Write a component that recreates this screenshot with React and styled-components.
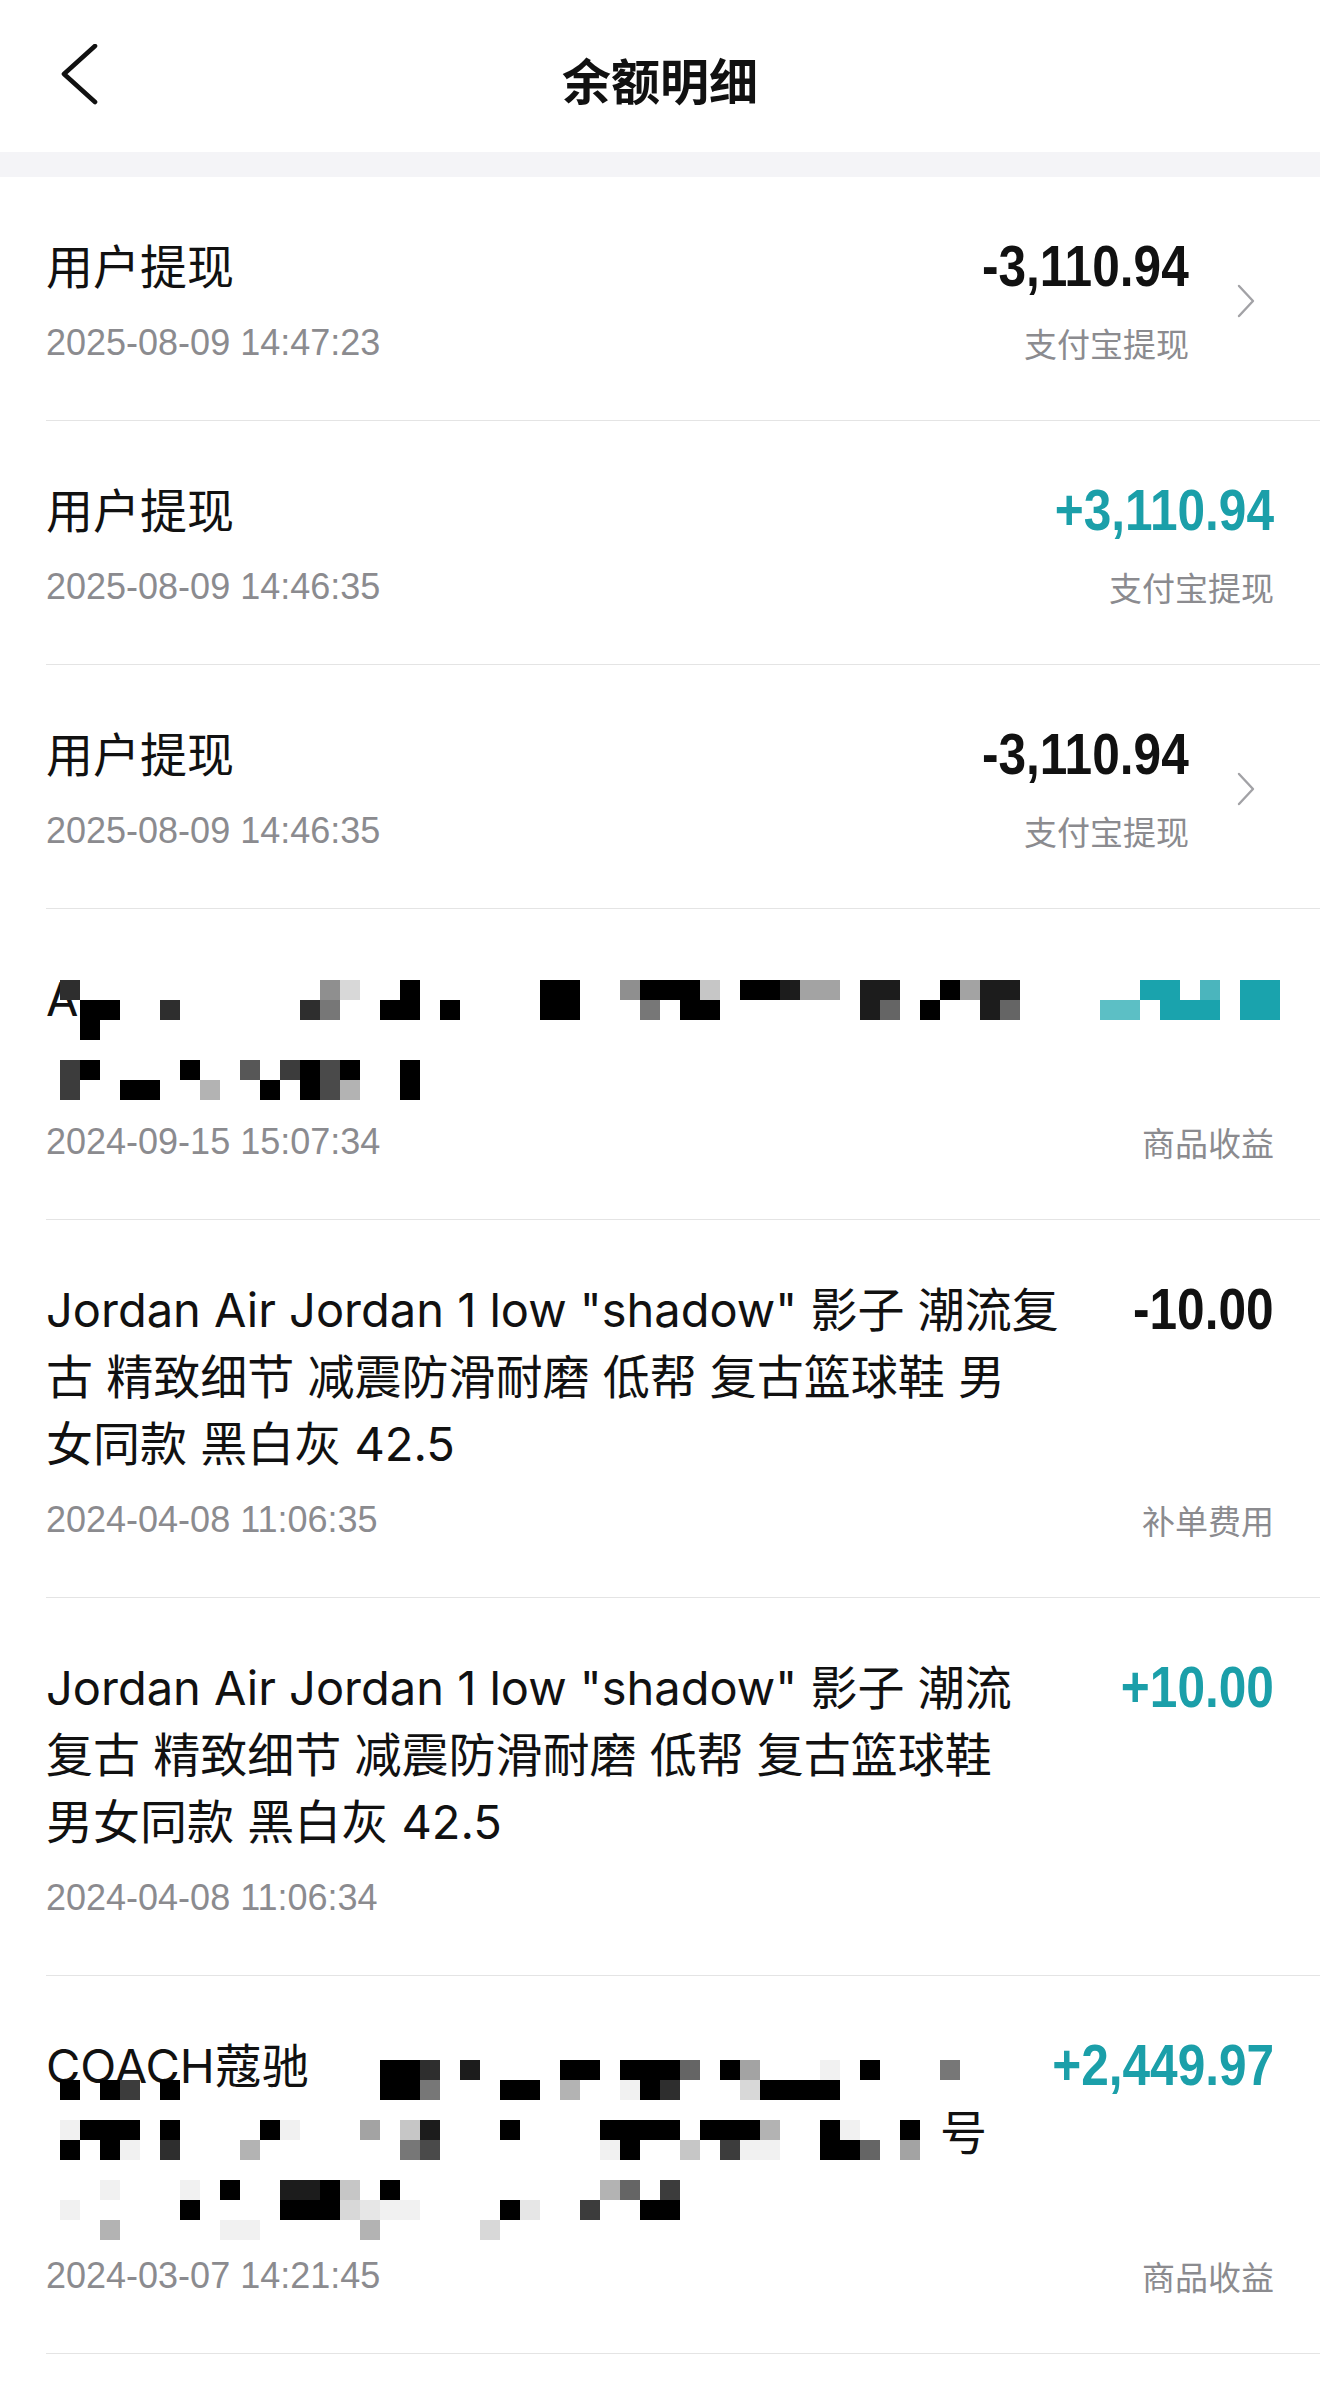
import React from "react";
import styled, { createGlobalStyle } from "styled-components";

const GlobalStyle = createGlobalStyle`
  body {
    margin: 0;
    background: #fff;
    font-family: "Liberation Sans", "Noto Sans CJK SC", sans-serif;
  }
  ul { margin: 0; padding: 0; list-style: none; }
`;

const TEAL = "#1b9fa9";
const GREY = "#8b8b8f";

// pixel mosaic palette (the screenshot blurs some titles this way)
const shades = {
  k: "#000",
  1: "#1c1c1c",
  2: "#2e2e2e",
  3: "#3c3c3c",
  4: "#4a4a4a",
  5: "#575757",
  6: "#656565",
  7: "#777",
  8: "#8f8f8f",
  9: "#a3a3a3",
  a: "#b3b3b3",
  b: "#c6c6c6",
  c: "#d8d8d8",
  d: "#e6e6e6",
  e: "#f1f1f1",
  t: "#1aa3ad",
  u: "#4bb5bd",
  v: "#5cbfc5",
};

const Page = styled.div`
  width: 1320px;
  min-height: 2387px;
  background: #fff;
`;

const Header = styled.header`
  height: 152px;
  display: grid;
  grid-template-columns: 1fr auto 1fr;
  align-items: center;
  padding: 0 60px;
  box-sizing: border-box;
`;

const Back = styled.button`
  justify-self: start;
  border: 0;
  background: none;
  padding: 0;
  width: 42px;
  height: 62px;
  margin-top: -2px;
  cursor: pointer;
`;

const PageTitle = styled.h1`
  margin: 0;
  font-family: "Noto Sans CJK SC", sans-serif;
  font-size: 49px;
  font-weight: 700;
  color: #111;
  line-height: 1;
  margin-top: 4px;
`;

const Band = styled.div`
  height: 25px;
  background: #f4f4f7;
`;

const Row = styled.li`
  display: flex;
  margin-left: 46px;
  padding: 56px 46px 52px 0;
  border-bottom: 1px solid #e4e4e4;
`;

const Main = styled.div`
  flex: 1;
  min-width: 0;
  display: flex;
  flex-direction: column;
`;

const Title = styled.div`
  position: relative;
  font-family: "Inter", "Noto Sans CJK SC", sans-serif;
  font-size: 47px;
  line-height: 67px;
  color: #111;
`;

const Line = styled.span`
  display: block;
  height: 67px;
  white-space: nowrap;
`;

const Masked = styled.span`
  display: inline-block;
  width: ${({ $w }) => $w}px;
`;

const DateText = styled.div`
  margin-top: 18px;
  font-size: 36px;
  line-height: 50px;
  color: ${GREY};
`;

const Side = styled.div`
  margin-left: 60px;
  display: flex;
  flex-direction: column;
  align-items: flex-end;
`;

// condensed bold figures, as in the app
const Amount = styled.div`
  font-family: "Liberation Sans", sans-serif;
  font-weight: 700;
  font-size: 57px;
  line-height: 67px;
  color: ${({ $plus }) => ($plus ? TEAL : "#111")};
  white-space: nowrap;
  transform: scaleX(0.87);
  transform-origin: right center;
`;

const Label = styled.div`
  margin-top: auto;
  font-family: "Noto Sans CJK SC", sans-serif;
  font-size: 33px;
  line-height: 50px;
  color: ${GREY};
`;

const Arrow = styled.div`
  width: 85px;
  display: flex;
  align-items: center;
  justify-content: flex-end;
  padding-right: 18px;
  box-sizing: border-box;
`;

const Mosaic = styled.div`
  position: absolute;
  top: ${({ $top }) => $top}px;
  left: ${({ $left }) => $left}px;
  display: flex;
  flex-direction: column;
  pointer-events: none;
`;

const MosaicRow = styled.div`
  display: flex;
  height: 20px;
`;

const Cell = styled.span`
  flex: none;
  width: 20px;
  height: 20px;
  background: ${({ $c }) => $c || "transparent"};
`;

const BackIcon = () => (
  <svg width="42" height="62" viewBox="0 0 42 62" fill="none">
    <polyline
      points="35,2 4,30 35,58"
      stroke="#111"
      strokeWidth="4.6"
      strokeLinecap="round"
      strokeLinejoin="round"
    />
  </svg>
);

const ChevronIcon = () => (
  <svg width="20" height="34" viewBox="0 0 20 34" fill="none">
    <polyline
      points="3,2 17,17 3,32"
      stroke="#a2a2a6"
      strokeWidth="2.4"
      strokeLinecap="round"
      strokeLinejoin="round"
    />
  </svg>
);

const Pixels = ({ rows, top, left }) => (
  <Mosaic $top={top} $left={left}>
    {rows.map((r, i) => (
      <MosaicRow key={i}>
        {r.split("").map((ch, j) => (
          <Cell key={j} $c={shades[ch]} />
        ))}
      </MosaicRow>
    ))}
  </Mosaic>
);

const blurA = [
  "2............8c..k......kk..8kkkb.kk199.11..k911......tt.u.tt",
  ".kk..2......27..kk.k....kk...7.kk.......16.k..16....vv.ttt.tt",
  ".k",
  "",
  "3k....k..5.3k4k..k",
  "3..kk..a..k.k4a..k",
];

const blurB = [
  "................kk2.1....kk.kkk6.k9...e.k...7",
  "k.k3.k..........kk7...kk.a..ek2...ckkkk",
  "",
  "ekkk.k....ke...9.b1...k....kkkk.kkka..ke..k",
  "k.ke.2...a.......74........ek..b.3ee..kk6.9",
  "",
  "..e...e.k..11kb.k..........a6.3",
  "e.....k....kkkcdee....kd..3..kk",
  "..a.....ee.....a.....c",
];

const records = [
  {
    lines: ["用户提现"],
    time: "2025-08-09 14:47:23",
    amount: "-3,110.94",
    label: "支付宝提现",
    arrow: true,
  },
  {
    lines: ["用户提现"],
    time: "2025-08-09 14:46:35",
    amount: "+3,110.94",
    label: "支付宝提现",
  },
  {
    lines: ["用户提现"],
    time: "2025-08-09 14:46:35",
    amount: "-3,110.94",
    label: "支付宝提现",
    arrow: true,
  },
  {
    lines: ["A", ""],
    blur: { rows: blurA, top: 15, left: 14 },
    time: "2024-09-15 15:07:34",
    label: "商品收益",
  },
  {
    lines: [
      'Jordan Air Jordan 1 low "shadow" 影子 潮流复',
      "古 精致细节 减震防滑耐磨 低帮 复古篮球鞋 男",
      "女同款 黑白灰 42.5",
    ],
    time: "2024-04-08 11:06:35",
    amount: "-10.00",
    label: "补单费用",
  },
  {
    lines: [
      'Jordan Air Jordan 1 low "shadow" 影子 潮流',
      "复古 精致细节 减震防滑耐磨 低帮 复古篮球鞋",
      "男女同款 黑白灰 42.5",
    ],
    time: "2024-04-08 11:06:34",
    amount: "+10.00",
  },
  {
    lines: ["COACH蔻驰", <><Masked $w={894} />号</>, ""],
    blur: { rows: blurB, top: 28, left: 14 },
    time: "2024-03-07 14:21:45",
    amount: "+2,449.97",
    label: "商品收益",
  },
];

const App = () => {
  return (
    <Page>
      <GlobalStyle />
      <Header>
        <Back aria-label="返回">
          <BackIcon />
        </Back>
        <PageTitle>余额明细</PageTitle>
        <span />
      </Header>
      <Band />
      <ul>
        {records.map((item, index) => (
          <Row key={index}>
            <Main>
              <Title>
                {item.lines.map((l, i) => (
                  <Line key={i}>{l}</Line>
                ))}
                {item.blur && <Pixels {...item.blur} />}
              </Title>
              <DateText>{item.time}</DateText>
            </Main>
            <Side>
              {item.amount && (
                <Amount $plus={item.amount.startsWith("+")}>{item.amount}</Amount>
              )}
              {item.label && <Label>{item.label}</Label>}
            </Side>
            {item.arrow && (
              <Arrow>
                <ChevronIcon />
              </Arrow>
            )}
          </Row>
        ))}
      </ul>
    </Page>
  );
};

export default App;
